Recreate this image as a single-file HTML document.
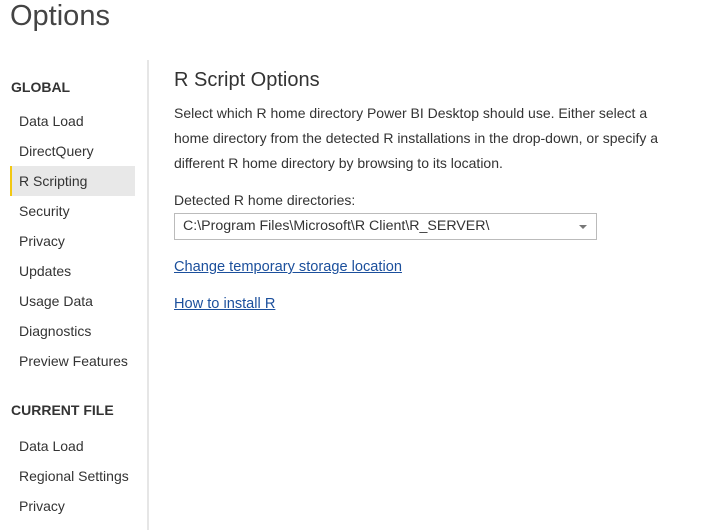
<!DOCTYPE html>
<html><head><style>
body{margin:0;width:708px;height:523px;background:#fff;font-family:"Liberation Sans",sans-serif;color:#333;position:relative;overflow:hidden}
.a{position:absolute;white-space:nowrap}
.title{left:10px;top:0px;font-size:29px;color:#444;font-weight:300}
.hd{left:11px;font-size:14px;font-weight:bold;color:#333}
.it{left:19px;font-size:14px;line-height:30px;height:30px}
.sel{position:absolute;left:10px;top:166px;width:125px;height:30px;background:#e8e8e8;border-left:2px solid #f2c811;box-sizing:border-box}
.div{position:absolute;left:147px;top:60px;width:2px;height:470px;background:#e6e6e6}
.h2{left:174px;top:69px;font-size:20px;color:#333}
.p{left:174px;font-size:14px}
.dd{position:absolute;left:174px;top:213px;width:423px;height:27px;border:1px solid #bbb;box-sizing:border-box;font-size:14.2px;line-height:25px;padding-left:8px}
.arr{position:absolute;right:9px;top:11px;width:0;height:0;border-left:4px solid transparent;border-right:4px solid transparent;border-top:4px solid #777}
.ln{left:174px;font-size:14.6px;color:#1b4f9c;text-decoration:underline}
</style></head><body>
<div class="a title">Options</div>
<div class="a hd" style="top:79px">GLOBAL</div>
<div class="sel"></div>
<div class="a it" style="top:106px">Data Load</div>
<div class="a it" style="top:136px">DirectQuery</div>
<div class="a it" style="top:166px">R Scripting</div>
<div class="a it" style="top:196px">Security</div>
<div class="a it" style="top:226px">Privacy</div>
<div class="a it" style="top:256px">Updates</div>
<div class="a it" style="top:286px">Usage Data</div>
<div class="a it" style="top:316px">Diagnostics</div>
<div class="a it" style="top:346px">Preview Features</div>
<div class="a hd" style="top:402px">CURRENT FILE</div>
<div class="a it" style="top:431px">Data Load</div>
<div class="a it" style="top:461px">Regional Settings</div>
<div class="a it" style="top:491px">Privacy</div>
<div class="div"></div>
<div class="a h2">R Script Options</div>
<div class="a p" style="top:105px">Select which R home directory Power BI Desktop should use. Either select a</div>
<div class="a p" style="top:130px">home directory from the detected R installations in the drop-down, or specify a</div>
<div class="a p" style="top:155px">different R home directory by browsing to its location.</div>
<div class="a p" style="top:192px">Detected R home directories:</div>
<div class="dd">C:\Program Files\Microsoft\R Client\R_SERVER\<div class="arr"></div></div>
<div class="a ln" style="top:259px">Change temporary storage location</div>
<div class="a ln" style="top:296px">How to install R</div>
</body></html>
